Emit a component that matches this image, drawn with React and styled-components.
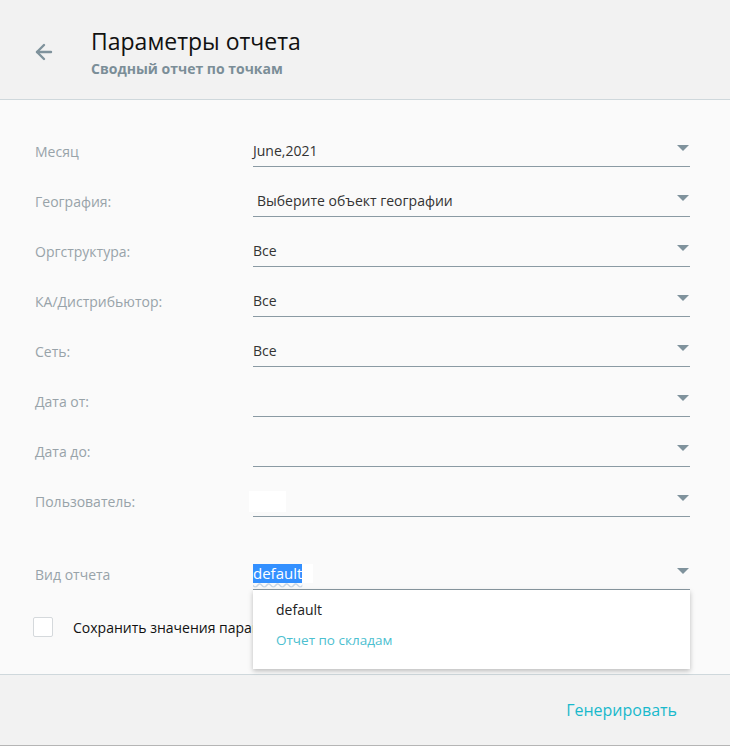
import styled, { createGlobalStyle } from "styled-components"
import { ArrowLeft } from "lucide-react"

const GlobalStyle = createGlobalStyle`
    body {
        margin: 0;
        background: #fafafa;
        font-family: "Open Sans", "Noto Sans", sans-serif;
    }
`

const fields = [
    { label: "Месяц", value: "June,2021" },
    { label: "География:", value: "Выберите объект географии", indent: true },
    { label: "Оргструктура:", value: "Все" },
    { label: "КА/Дистрибьютор:", value: "Все" },
    { label: "Сеть:", value: "Все" },
    { label: "Дата от:", value: "" },
    { label: "Дата до:", value: "" },
    { label: "Пользователь:", value: "", blank: true },
]

export default function App() {
    return (
        <Page>
            <GlobalStyle />
            <Header>
                <BackButton>
                    <ArrowLeft size={24} strokeWidth={2.4} color="#7f929c" />
                </BackButton>
                <Titles>
                    <h1>Параметры отчета</h1>
                    <h2>Сводный отчет по точкам</h2>
                </Titles>
            </Header>
            <Body>
                {fields.map((f) => (
                    <Row key={f.label}>
                        <Label>{f.label}</Label>
                        <Field>
                            {f.blank && <WhiteBox />}
                            <Value $indent={f.indent}>{f.value}</Value>
                            <Caret />
                        </Field>
                    </Row>
                ))}
                <Row $spaced>
                    <Label>Вид отчета</Label>
                    <Field>
                        <Value>
                            <Selected>default</Selected>
                            <Tail />
                        </Value>
                        <Caret />
                        <Menu>
                            <MenuItem>default</MenuItem>
                            <MenuItem $active>Отчет по складам</MenuItem>
                        </Menu>
                    </Field>
                </Row>
                <CheckRow>
                    <Box />
                    <span>Сохранить значения параметров</span>
                </CheckRow>
            </Body>
            <Footer>
                <GenerateButton>Генерировать</GenerateButton>
            </Footer>
        </Page>
    )
}

const Page = styled.div`
    display: flex;
    flex-direction: column;
    height: 746px;
    overflow: hidden;
`

const Header = styled.div`
    display: flex;
    align-items: center;
    height: 100px;
    box-sizing: border-box;
    padding: 7px 0 0 32px;
    background: #f2f2f2;
    border-bottom: 1px solid #cfd8dc;
`

const BackButton = styled.div`
    display: flex;
    width: 26px;
    margin-right: 33px;
    margin-top: -2px;
`

const Titles = styled.div`
    h1{
        margin: 0;
        font-size: 23px;
        font-weight: 400;
        color: #111;
        line-height: 30px;
    }
    h2{
        margin: 2px 0 0;
        font-size: 14px;
        font-weight: 700;
        color: #7b8e98;
        line-height: 22px;
    }
`

const Body = styled.div`
    flex: 1;
    padding: 26px 0 0 35px;
    background: #fafafa;
`

const Row = styled.div`
    display: grid;
    grid-template-columns: 218px 437px;
    align-items: center;
    height: 50px;
    margin-top: ${(p) => (p.$spaced ? "23px" : "0")};
`

const Label = styled.div`
    font-size: 14px;
    color: #98a3a9;
`

const Field = styled.div`
    position: relative;
    display: flex;
    align-items: center;
    height: 30px;
    border-bottom: 1px solid #8a9aa3;
`

const Value = styled.div`
    flex: 1;
    display: flex;
    align-items: center;
    padding-left: ${(p) => (p.$indent ? "4px" : "0")};
    font-size: 14px;
    color: #333;
`

const WhiteBox = styled.span`
    position: absolute;
    left: -4px;
    top: 5px;
    width: 37px;
    height: 21px;
    background: #fff;
`

const Caret = styled.span`
    width: 0;
    height: 0;
    margin-right: 1px;
    margin-bottom: 6px;
    border-left: 6px solid transparent;
    border-right: 6px solid transparent;
    border-top: 6px solid #7f929c;
`

const Selected = styled.span`
    background: #3390ff;
    color: #fff;
    font-size: 15px;
    line-height: 19px;
    text-decoration: underline wavy #c9d6e4;
    text-underline-offset: 3px;
`

const Tail = styled.span`
    width: 11px;
    height: 19px;
    background: #fff;
`

const Menu = styled.div`
    position: absolute;
    top: 31px;
    left: 0;
    right: 0;
    z-index: 2;
    padding: 8px 0 0;
    height: 79px;
    box-sizing: border-box;
    background: #fff;
    box-shadow: 0 2px 5px rgba(0, 0, 0, 0.25);
`

const MenuItem = styled.div`
    padding-left: 23px;
    height: 30px;
    line-height: 24px;
    font-size: ${(p) => (p.$active ? "13.5px" : "14px")};
    color: ${(p) => (p.$active ? "#4cc0d0" : "#222")};
`

const CheckRow = styled.div`
    display: flex;
    align-items: center;
    margin-top: 18px;
    font-size: 14px;
    color: #111;
    span{
        margin-left: 20px;
        white-space: nowrap;
    }
`

const Box = styled.div`
    width: 18px;
    height: 18px;
    margin-left: -2px;
    border: 1px solid #d5d9dc;
    border-radius: 2px;
    background: #fff;
`

const Footer = styled.div`
    display: flex;
    align-items: center;
    justify-content: flex-end;
    height: 72px;
    box-sizing: border-box;
    padding-right: 53px;
    background: #f2f2f2;
    border-top: 1px solid #cfd8dc;
    border-bottom: 1px solid #b5b5b5;
`

const GenerateButton = styled.div`
    font-size: 16px;
    color: #19b9cc;
    cursor: pointer;
`
